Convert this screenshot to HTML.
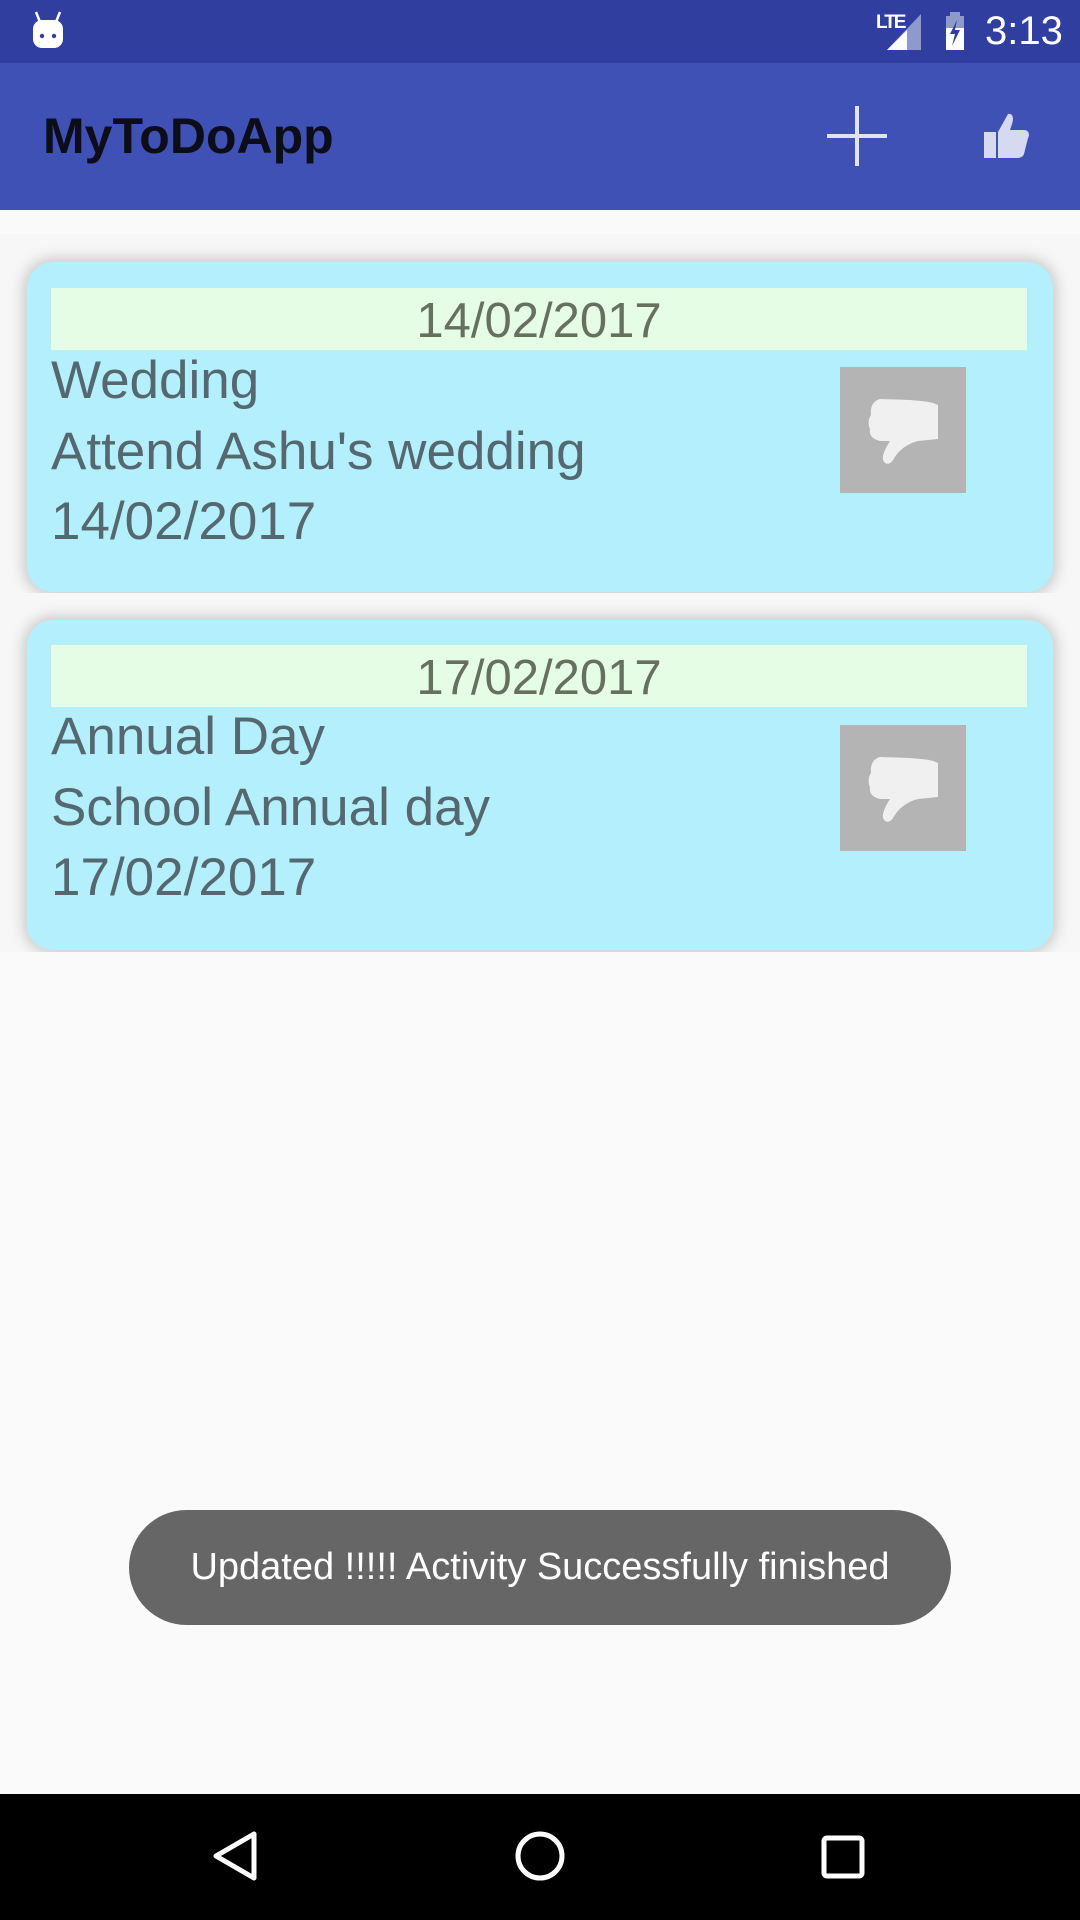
<!DOCTYPE html>
<html><head><meta charset="utf-8"><style>
*{margin:0;padding:0;box-sizing:border-box}
body{width:1080px;height:1920px;background:#FAFAFA;font-family:"Liberation Sans",sans-serif;position:relative;overflow:hidden}
.abs{position:absolute}
.row{position:absolute;left:0;width:1080px;overflow:hidden;background:#F7F7F7}
.card{position:absolute;left:27px;width:1026px;background:#B3EFFD;border-radius:26px;box-shadow:0 0 14px 4px rgba(0,0,0,0.18)}
.hdr{position:absolute;left:24px;width:976px;height:62px;background:#E5FDE5;color:#66705F;font-size:49px;text-align:center;line-height:66px}
.t{position:absolute;left:24px;color:#56686F;font-size:53px;white-space:nowrap}
.th{position:absolute;left:813px;width:126px;height:126px;background:#B4B4B4}
</style></head><body>
<div class="abs" style="left:0;top:0;width:1080px;height:63px;background:#303F9F"></div>
<svg class="abs" style="left:30px;top:10px" width="36" height="40" viewBox="0 0 36 40"><path d="M6 2 L10 12 M30 2 L26 12" stroke="#fff" stroke-width="2.5"/><rect x="3" y="10" width="30" height="28" rx="9" fill="#fff"/><circle cx="12" cy="26" r="2.2" fill="#303F9F"/><circle cx="24" cy="26" r="2.2" fill="#303F9F"/></svg>
<div class="abs" style="left:876px;top:12px;color:#fff;font-size:19px;font-weight:bold;letter-spacing:-2px">LTE</div>
<svg class="abs" style="left:885px;top:12px" width="38" height="40"><polygon points="36,2 36,38 2,38" fill="#8E9ACC"/><polygon points="22,18 22,38 2,38" fill="#fff"/></svg>
<svg class="abs" style="left:942px;top:12px" width="26" height="40"><rect x="4" y="4" width="18" height="34" fill="#fff"/><rect x="8" y="0" width="10" height="5" fill="#8E9ACC"/><rect x="4" y="4" width="18" height="12" fill="#8E9ACC"/><path d="M15 8 L8 22 L13 22 L10 34 L18 18 L13 18 Z" fill="#303F9F"/></svg>
<div class="abs" style="left:985px;top:9px;color:#fff;font-size:40px">3:13</div>
<div class="abs" style="left:0;top:63px;width:1080px;height:147px;background:#3F51B5"></div>
<div class="abs" style="left:43px;top:107px;font-size:50px;color:#0d0d1a;font-weight:bold">MyToDoApp</div>
<svg class="abs" style="left:825px;top:104px" width="64" height="64"><path d="M32 2 V62 M2 32 H62" stroke="#E0E3F3" stroke-width="4"/></svg>
<svg class="abs" style="left:980px;top:110px" width="52" height="52" viewBox="0 0 52 52"><path d="M4 22 H16 V48 H4 Z" fill="#D6DAF0"/><path d="M18 22 L28 4 C33 3 34 8 32 14 L30 20 H44 C49 20 50 25 48 28 L44 44 C43 47 40 48 37 48 H18 Z" fill="#D6DAF0"/></svg>

<div class="row" style="top:210px;height:24px;background:#FAFAFA"></div>
<div class="row" style="top:234px;height:359px">
 <div class="card" style="top:28px;height:330px">
  <div class="hdr" style="top:26px">14/02/2017</div>
  <div class="t" style="top:88px">Wedding</div>
  <div class="t" style="top:159px">Attend Ashu's wedding</div>
  <div class="t" style="top:229px">14/02/2017</div>
  <div class="th" style="top:105px"><svg width="126" height="126" viewBox="0 0 126 126"><path d="M40 32 C33 34 30 40 31 48 C28 52 28 58 30 62 C29 68 32 72 40 74 L50 74 C46 80 42 88 43 93 C45 98 50 98 53 93 C58 84 66 77 78 74 L98 72 V38 C90 34 80 34 70 33 Z" fill="#F0F0F0"/></svg></div>
 </div>
</div>
<div class="row" style="top:593px;height:359px">
 <div class="card" style="top:27px;height:330px">
  <div class="hdr" style="top:25px">17/02/2017</div>
  <div class="t" style="top:86px">Annual Day</div>
  <div class="t" style="top:157px">School Annual day</div>
  <div class="t" style="top:227px">17/02/2017</div>
  <div class="th" style="top:105px"><svg width="126" height="126" viewBox="0 0 126 126"><path d="M40 32 C33 34 30 40 31 48 C28 52 28 58 30 62 C29 68 32 72 40 74 L50 74 C46 80 42 88 43 93 C45 98 50 98 53 93 C58 84 66 77 78 74 L98 72 V38 C90 34 80 34 70 33 Z" fill="#F0F0F0"/></svg></div>
 </div>
</div>

<div class="abs" style="left:129px;top:1510px;width:822px;height:115px;background:#666;border-radius:58px;color:#fff;font-size:38px;line-height:115px;text-align:center;white-space:nowrap">Updated !!!!! Activity Successfully finished</div>

<div class="abs" style="left:0;top:1794px;width:1080px;height:126px;background:#000"></div>
<svg class="abs" style="left:210px;top:1830px" width="50" height="52"><path d="M44 4 L6 26 L44 48 Z" fill="none" stroke="#fff" stroke-width="5" stroke-linejoin="round"/></svg>
<svg class="abs" style="left:513px;top:1829px" width="54" height="54"><circle cx="27" cy="27" r="22" fill="none" stroke="#fff" stroke-width="5"/></svg>
<svg class="abs" style="left:820px;top:1834px" width="46" height="46"><rect x="4" y="4" width="38" height="38" rx="3" fill="none" stroke="#fff" stroke-width="5"/></svg>
</body></html>
